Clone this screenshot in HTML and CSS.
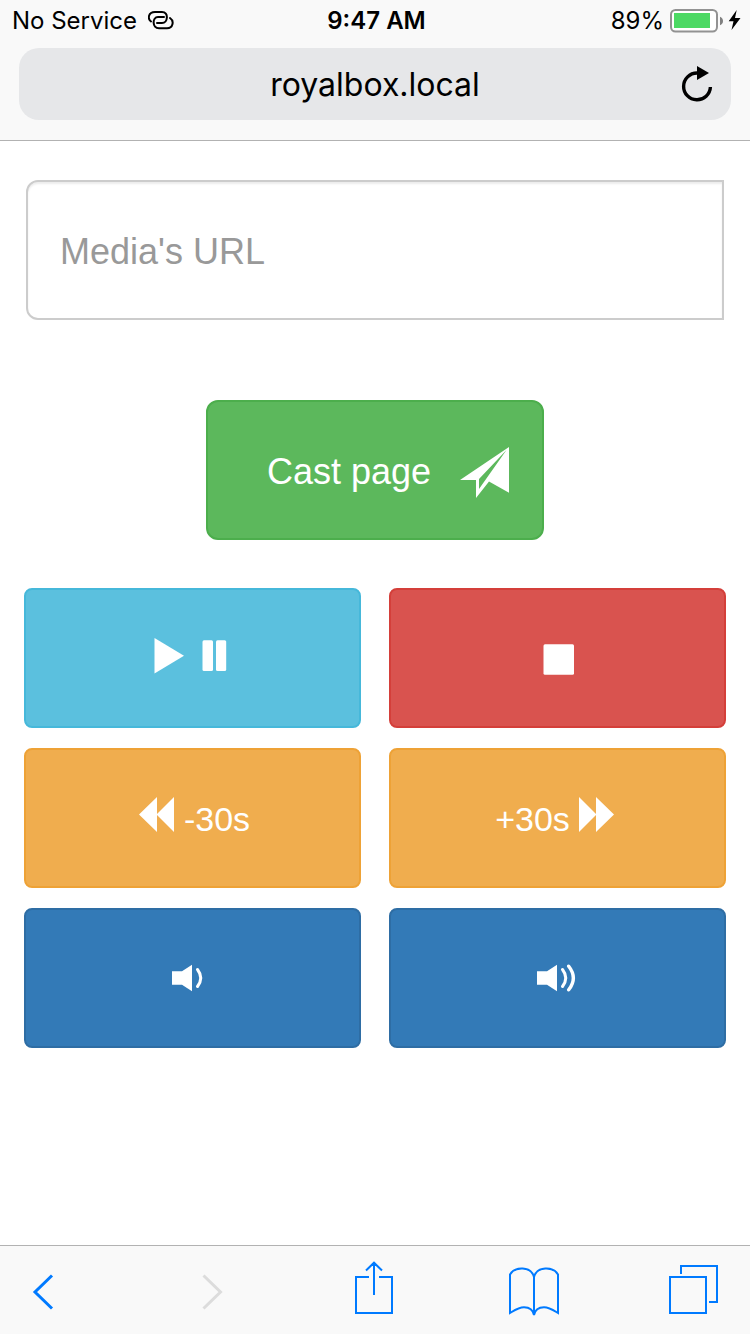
FILE: index.html
```
<!DOCTYPE html>
<html lang="en">
<head>
<meta charset="utf-8">
<meta name="viewport" content="width=device-width">
<title>royalbox.local</title>
<link rel="stylesheet" href="styles.css">
</head>
<body>
<header class="browser-top">
  <div class="status">
    <div class="status-left">
      <span>No Service</span>
      <svg width="26" height="21" viewBox="0 0 26 21" fill="none" stroke="#000" stroke-width="2" stroke-linecap="round" aria-hidden="true">
        <path d="M3 10.5C-.5 8 0 1 7 1H14C21 1 20 12 14 12H9"/>
        <path d="M22 7C26.5 10 25 17.3 19 17.3H11C4 17.3 4 6 10 6H16"/>
      </svg>
    </div>
    <div class="status-time">9:47 AM</div>
    <div class="status-right">
      <span>89%</span>
      <svg width="71" height="24" viewBox="0 0 71 24" aria-hidden="true">
        <rect x="1" y="1" width="46" height="21.5" rx="4.5" fill="#fff" stroke="#929292" stroke-width="2"/>
        <rect x="4" y="4" width="36" height="15" fill="#4cd964"/>
        <path d="M50 7.7C54 9 54 15 50 16.2z" fill="#808080"/>
        <path d="M66.700 1L58.700 12.200H63.500L61.500 21L70.500 9H65z" fill="#000"/>
      </svg>
    </div>
  </div>
  <div class="address">
    <input class="address-text" type="text" value="royalbox.local" aria-label="Address">
    <button class="reload" type="button" aria-label="Reload">
      <svg width="32" height="36" viewBox="0 0 32 36" aria-hidden="true">
        <path d="M16 7A13.400 13.400 0 1 0 29.400 21" fill="none" stroke="#000" stroke-width="3.400"/>
        <path d="M16 0L28 7L16 14z"/>
      </svg>
    </button>
  </div>
</header>

<main class="page">
  <input class="media-url" type="text" placeholder="Media's URL" aria-label="Media's URL">
  <button class="btn cast" type="button">
    <span>Cast page</span>
    <svg width="50" height="51" viewBox="0 0 50 51" fill="currentColor" fill-rule="evenodd" aria-hidden="true">
      <path d="M0 33L49 0V45.700L29 34.500L16 51V33zM46.500 3L19 32V42z"/>
    </svg>
  </button>
  <div class="controls">
    <button class="btn info" type="button" aria-label="Play or pause">
      <svg width="77" height="40" viewBox="0 0 77 40" fill="currentColor" aria-hidden="true">
        <path d="M.5 0L30 17.700L.5 35.500z"/>
        <rect x="48.500" y="2.300" width="10.500" height="30.700" rx="1.500"/>
        <rect x="62" y="2.300" width="10.200" height="30.700" rx="1.500"/>
      </svg>
    </button>
    <button class="btn danger" type="button" aria-label="Stop">
      <svg width="33" height="34" viewBox="0 0 33 34" fill="currentColor" aria-hidden="true">
        <rect x="2.500" y="3.300" width="30.500" height="30.500" rx="1.500"/>
      </svg>
    </button>
    <button class="btn warning rewind" type="button">
      <svg width="35" height="44" viewBox="0 0 35 44" fill="currentColor" aria-hidden="true">
        <path d="M0 17.500L18 0V17L35 0V35L18 18V35z"/>
      </svg>
      <span>-30s</span>
    </button>
    <button class="btn warning" type="button">
      <span>+30s</span>
      <svg width="41" height="44" viewBox="0 0 41 44" fill="currentColor" aria-hidden="true">
        <path d="M35 17.500L17 0V17L0 0V35L17 18V35z"/>
      </svg>
    </button>
    <button class="btn primary" type="button" aria-label="Volume down">
      <svg width="41" height="28" viewBox="0 0 41 28" aria-hidden="true">
        <path d="M0 7.200H10L20 .7V27.200L10 20.700H0z" fill="currentColor"/>
        <path d="M25.500 5.500Q32 14 25.500 22.500" fill="none" stroke="currentColor" stroke-width="3" stroke-linecap="round"/>
      </svg>
    </button>
    <button class="btn primary" type="button" aria-label="Volume up">
      <svg width="41" height="28" viewBox="0 0 41 28" fill="none" stroke="currentColor" stroke-linecap="round" aria-hidden="true">
        <path d="M0 7.200H10L20 .7V27.200L10 20.700H0z" fill="currentColor" stroke="none"/>
        <path d="M25.500 5.500Q32 14 25.500 22.500" stroke-width="3"/>
        <path d="M31.700 2.200Q41 14 31.700 25.800" stroke-width="3.400"/>
      </svg>
    </button>
  </div>
</main>

<nav class="toolbar" aria-label="Browser">
  <button class="tool" type="button" aria-label="Back">
    <svg class="tool-icon" viewBox="0 0 50 56" aria-hidden="true"><path d="M20 13.500L3 30L20 46.500" stroke-width="3"/></svg>
  </button>
  <button class="tool tool-off" type="button" aria-label="Forward" disabled>
    <svg class="tool-icon" viewBox="0 0 50 56" aria-hidden="true"><path d="M12.500 13.500L29.500 30L12.500 46.500" stroke-width="3"/></svg>
  </button>
  <button class="tool" type="button" aria-label="Share">
    <svg class="tool-icon" viewBox="0 0 50 56" aria-hidden="true"><path d="M19 15H6V51H42V15H29M24 1V33M16 8.500L24 .7L32 8.500"/></svg>
  </button>
  <button class="tool" type="button" aria-label="Bookmarks">
    <svg class="tool-icon" viewBox="0 0 50 56" aria-hidden="true"><path d="M25 53V15C22 4 6 4 1 12.500V51C6 48 10 45.300 15 45.300C20 45.300 24 48 25 53C26 48 30 45.300 35 45.300C40 45.300 44 48 49 51V12.500C44 4 28 4 25 15"/></svg>
  </button>
  <button class="tool" type="button" aria-label="Tabs">
    <svg class="tool-icon" viewBox="0 0 50 56" aria-hidden="true"><path d="M2 15H38V51H2zM13 12V4H49V40H41"/></svg>
  </button>
</nav>
</body>
</html>
```
FILE: styles.css
```
* {
  box-sizing: border-box;
}

body {
  margin: 0;
  min-height: 100vh;
  display: flex;
  flex-direction: column;
  background: #fff;
  font-family: "Liberation Sans", Arial, sans-serif;
}

button,
input {
  font: inherit;
  margin: 0;
}

svg {
  display: block;
  flex: none;
}

.browser-top {
  padding-bottom: 20px;
  background: #f9f9f9;
  border-bottom: 1px solid #b2b2b2;
  font-family: Inter, sans-serif;
  color: #000;
}

.status {
  display: grid;
  grid-template-columns: 1fr auto 1fr;
  align-items: center;
  height: 40px;
  margin-bottom: 8px;
  padding: 2px 9px 0 12px;
  font-size: 24px;
  line-height: 38px;
}

.status-left,
.status-right {
  display: flex;
  align-items: center;
}

.status-left {
  gap: 11px;
}

.status-right {
  justify-content: flex-end;
  gap: 6px;
}

.status-time {
  font-weight: 600;
}

.address {
  display: flex;
  align-items: center;
  height: 72px;
  margin: 0 19px;
  padding: 0 18px 0 50px;
  background: #e6e7e9;
  border-radius: 20px;
}

.address-text {
  flex: 1;
  min-width: 0;
  padding: 0;
  border: 0;
  background: none;
  color: #000;
  font-size: 32px;
  text-align: center;
}

.reload {
  padding: 0;
  border: 0;
  background: none;
}

.page {
  flex: 1;
  display: flex;
  flex-direction: column;
  align-items: center;
  padding: 39px 24px;
}

.media-url {
  align-self: stretch;
  height: 140px;
  margin: 0 2px 80px;
  padding: 4px 32px 0;
  border: 2px solid #ccc;
  border-radius: 12px 0 0 12px;
  background: #fff;
  box-shadow: inset 0 2px 2px rgba(0, 0, 0, 0.075);
  font-size: 36px;
}

.media-url::placeholder {
  color: #999;
  opacity: 1;
}

.btn {
  display: flex;
  align-items: center;
  justify-content: center;
  gap: 9px;
  height: 140px;
  padding: 0 24px;
  border: 2px solid;
  border-radius: 8px;
  color: #fff;
  font-size: 34px;
}

.cast {
  gap: 29px;
  margin-bottom: 48px;
  padding: 4px 32px 0 59px;
  border-radius: 12px;
  background: #5cb85c;
  border-color: #4cae4c;
  font-size: 36px;
}

.controls {
  align-self: stretch;
  display: grid;
  grid-template-columns: 1fr 1fr;
  gap: 20px 28px;
}

.info {
  background: #5bc0de;
  border-color: #46b8da;
}

.danger {
  background: #d9534f;
  border-color: #d43f3a;
}

.warning {
  padding-top: 2px;
  background: #f0ad4e;
  border-color: #eea236;
}

.rewind {
  gap: 10px;
  padding-left: 28px;
}

.primary {
  background: #337ab7;
  border-color: #2e6da4;
}

.toolbar {
  display: flex;
  align-items: center;
  justify-content: space-between;
  height: 89px;
  padding: 0 32px;
  background: #f9f9f9;
  border-top: 1px solid #b2b2b2;
}

.tool {
  padding: 0;
  border: 0;
  background: none;
  color: #007aff;
}

.tool-off {
  color: #dcdcdc;
}

.tool-icon {
  width: 50px;
  height: 56px;
  overflow: visible;
  fill: none;
  stroke: currentColor;
  stroke-width: 2;
}
```
